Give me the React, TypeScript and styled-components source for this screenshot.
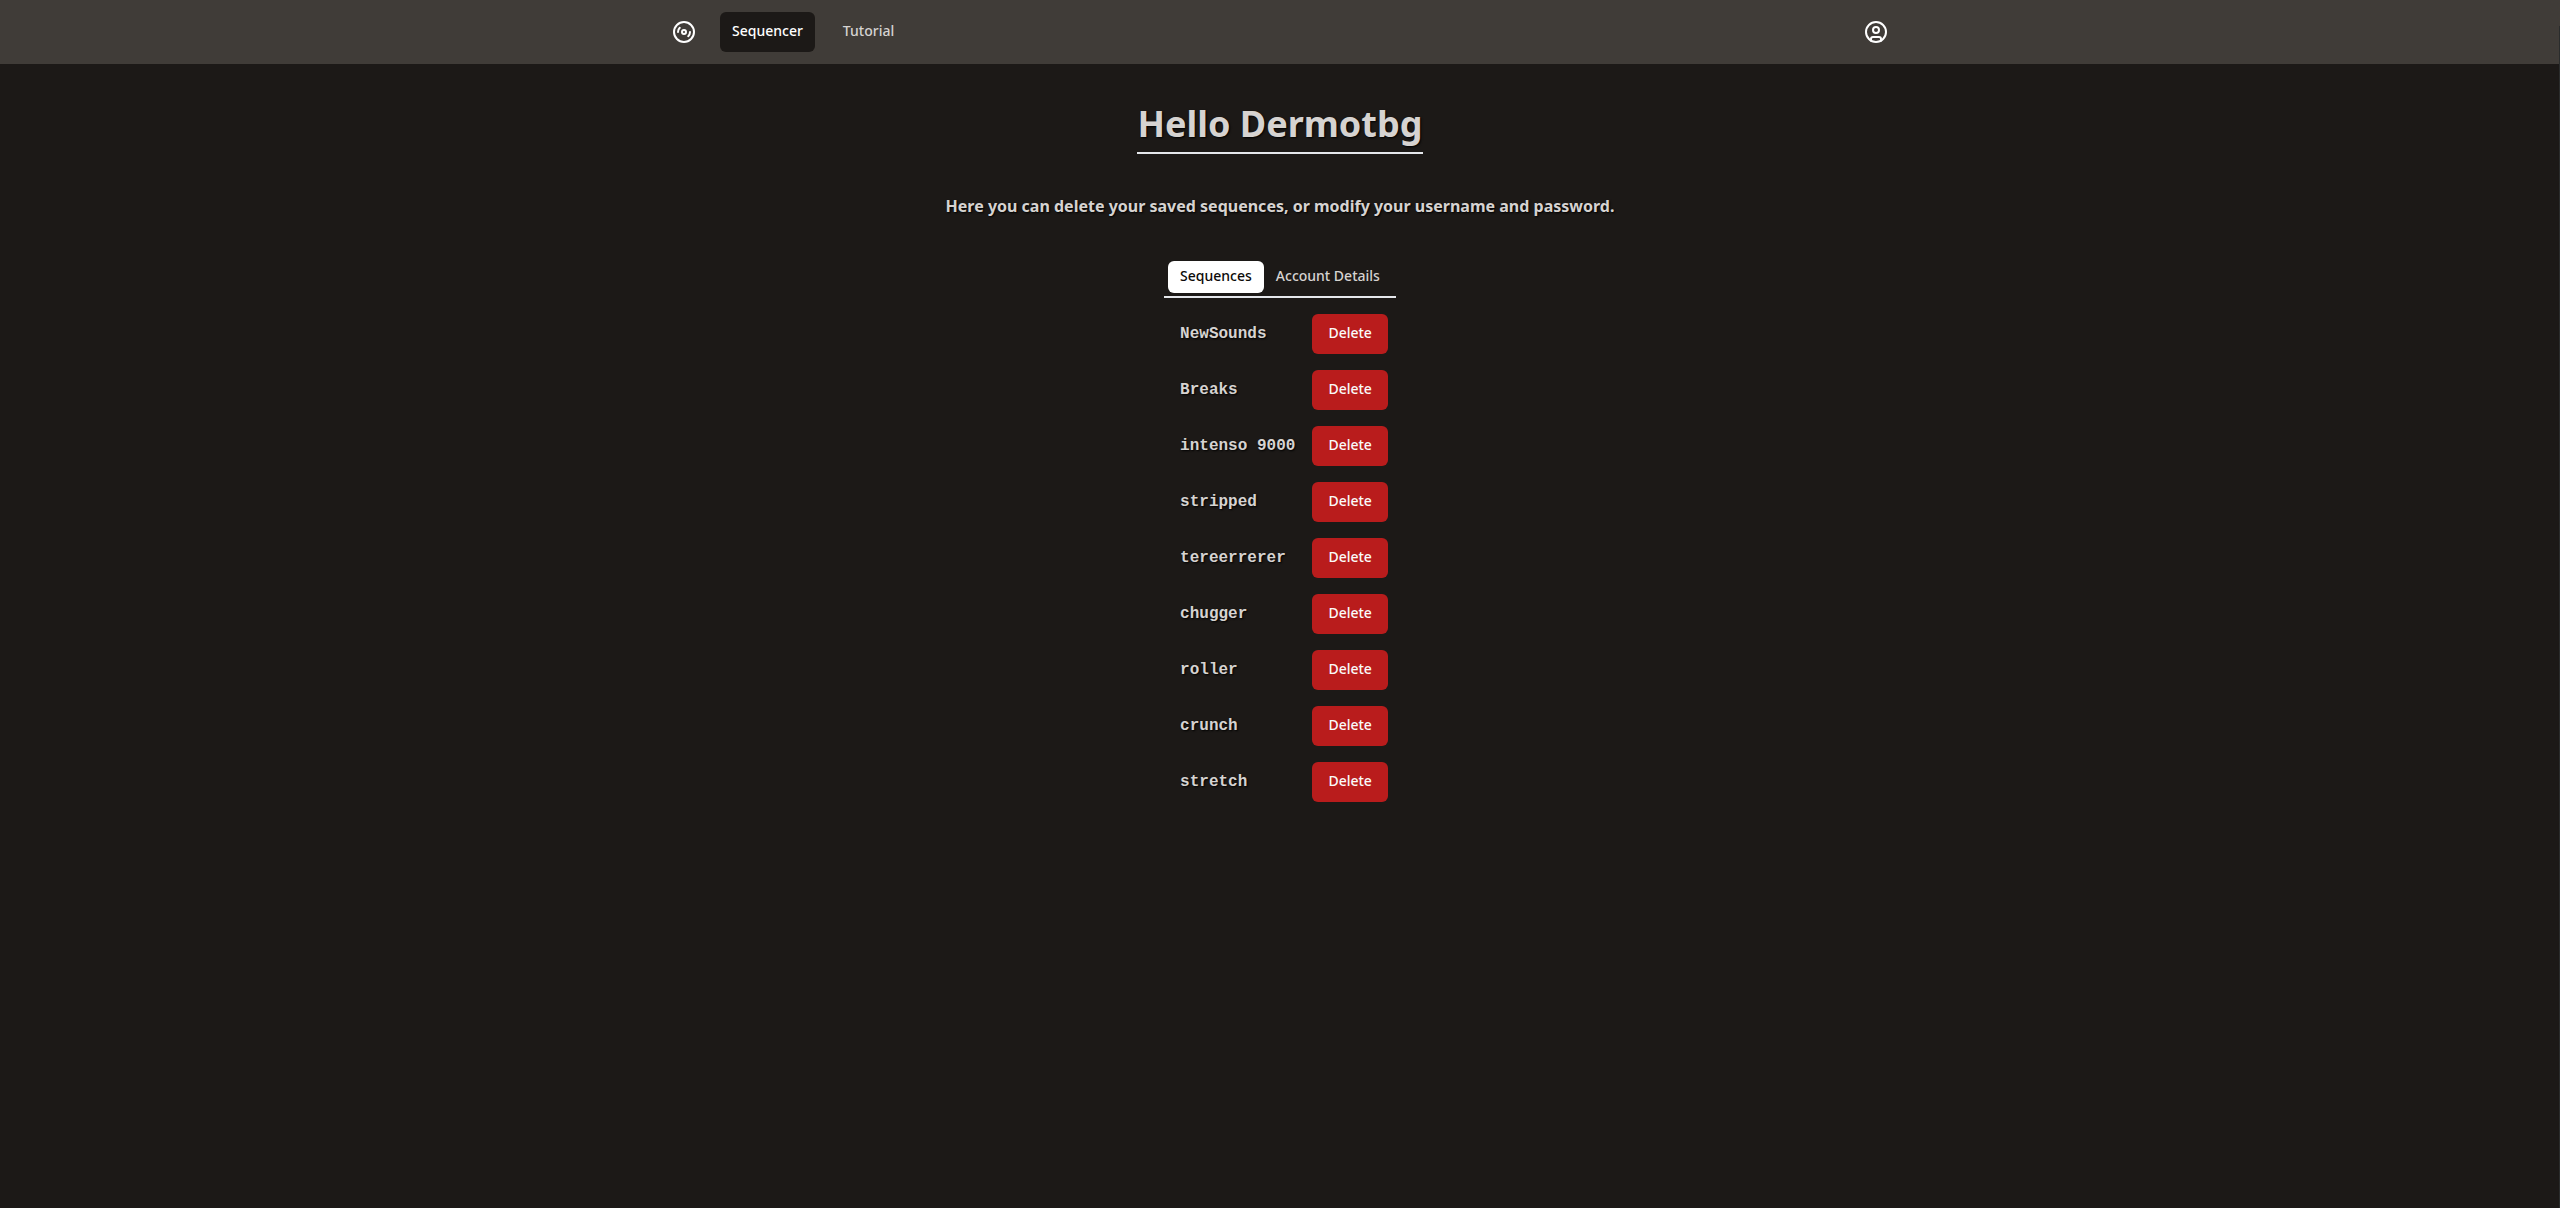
import React from 'react';
import styled, { createGlobalStyle } from 'styled-components';
import { Disc3, CircleUser } from 'lucide-react';

const GlobalStyle = createGlobalStyle`
  *, *::before, *::after { box-sizing: border-box; }
  body {
    margin: 0;
    background: #1c1917;
    color: #d6d3d1;
    font-family: 'Noto Sans', sans-serif;
    font-size: 16px;
    line-height: 24px;
  }
  h1, h2, h3, p, ul { margin: 0; padding: 0; }
  button { font-family: inherit; border: 0; cursor: pointer; }
`;

const textShadow = '1px 1px 2px #000';

const Page = styled.div`
  min-height: 100vh;
  display: flex;
  flex-direction: column;
`;

const ScrollEdge = styled.div`
  position: fixed;
  top: 26px;
  right: 0;
  bottom: 0;
  width: 1px;
  background: #2a2c2c;
`;

const Header = styled.header`
  background: #403c38;
`;

const HeaderInner = styled.div`
  width: 1280px;
  height: 64px;
  margin: 0 auto;
  padding: 0 32px;
  display: flex;
  align-items: center;
  color: #fff;
`;

const Nav = styled.nav`
  display: flex;
  gap: 16px;
  margin-left: 24px;
  margin-right: auto;
`;

const NavLink = styled.a<{ $active?: boolean }>`
  height: 40px;
  padding: 9px 12px 0;
  border-radius: 6px;
  font-size: 14px;
  line-height: 20px;
  font-weight: 500;
  color: ${(p) => (p.$active ? '#fff' : '#d6d3d1')};
  background: ${(p) => (p.$active ? '#1c1917' : 'transparent')};
`;

const Main = styled.main`
  display: flex;
  flex-direction: column;
  align-items: center;
`;

const Title = styled.h1`
  margin-top: 40px;
  padding-bottom: 8px;
  border-bottom: 2px solid #e5e7eb;
  font-size: 36px;
  line-height: 40px;
  font-weight: 700;
  text-shadow: ${textShadow};
`;

const Intro = styled.p`
  margin-top: 40px;
  font-weight: 700;
  text-shadow: ${textShadow};
`;

const Tabs = styled.section`
  margin-top: 40px;
`;

const TabList = styled.div`
  display: flex;
  align-items: center;
  height: 40px;
  padding: 4px;
  border-bottom: 2px solid #e5e7eb;
`;

const Tab = styled.button<{ $active?: boolean }>`
  height: 32px;
  padding: 0 12px 2px;
  border-radius: 6px;
  font-size: 14px;
  line-height: 20px;
  font-weight: 500;
  color: ${(p) => (p.$active ? '#0c0a09' : '#d6d3d1')};
  background: ${(p) => (p.$active ? '#fff' : 'transparent')};
`;

const SequenceList = styled.ul`
  list-style: none;
  display: grid;
  gap: 16px;
  padding: 16px 8px 16px 16px;
`;

const SequenceRow = styled.li`
  display: flex;
  align-items: center;
  justify-content: space-between;
`;

const SequenceName = styled.h3`
  font-family: 'Liberation Mono', monospace;
  font-size: 16px;
  line-height: 24px;
  font-weight: 600;
  text-shadow: ${textShadow};
`;

const DeleteButton = styled.button`
  height: 40px;
  padding: 0 16px 2px;
  border-radius: 6px;
  background: #b91c1c;
  color: #fafaf9;
  font-size: 14px;
  line-height: 20px;
  font-weight: 500;
`;

const sequences = [
  'NewSounds',
  'Breaks',
  'intenso 9000',
  'stripped',
  'tereerrerer',
  'chugger',
  'roller',
  'crunch',
  'stretch',
];

export default function App() {
  return (
    <Page>
      <GlobalStyle />
      <Header>
        <HeaderInner>
          <Disc3 size={24} />
          <Nav>
            <NavLink $active>Sequencer</NavLink>
            <NavLink>Tutorial</NavLink>
          </Nav>
          <CircleUser size={24} />
        </HeaderInner>
      </Header>
      <Main>
        <Title>Hello Dermotbg</Title>
        <Intro>Here you can delete your saved sequences, or modify your username and password.</Intro>
        <Tabs>
          <TabList role="tablist">
            <Tab role="tab" $active>Sequences</Tab>
            <Tab role="tab">Account Details</Tab>
          </TabList>
          <SequenceList>
            {sequences.map((name) => (
              <SequenceRow key={name}>
                <SequenceName>{name}</SequenceName>
                <DeleteButton>Delete</DeleteButton>
              </SequenceRow>
            ))}
          </SequenceList>
        </Tabs>
      </Main>
      <ScrollEdge />
    </Page>
  );
}
